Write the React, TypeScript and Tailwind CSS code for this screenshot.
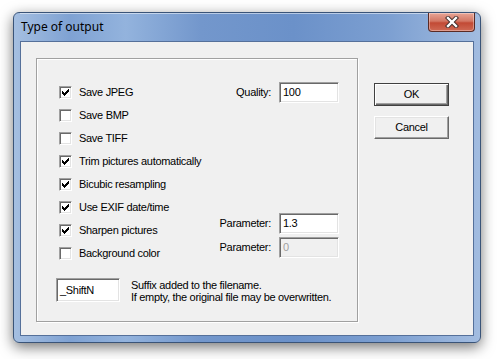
import React from "react";

function CheckMark() {
  return (
    <svg width="7" height="7" viewBox="0 0 7 7" shapeRendering="crispEdges">
      <path d="M6 0h1v1h-1zM5 1h2v1h-2zM0 2h1v1h-1zM4 2h3v1h-3zM0 3h2v1h-2zM3 3h3v1h-3zM0 4h5v1h-5zM1 5h3v1h-3zM2 6h1v1h-1z" fill="#000" />
    </svg>
  );
}

function Check({ checked }: { checked?: boolean }) {
  return (
    <span className="w-[13px] h-[13px] shrink-0 flex items-center justify-center bg-white border border-t-[#a0a0a0] border-l-[#a0a0a0] border-b-white border-r-white shadow-[inset_1px_1px_0_#696969,inset_-1px_-1px_0_#e3e3e3]">
      {checked && <CheckMark />}
    </span>
  );
}

function Row({ checked, label }: { checked?: boolean; label: string }) {
  return (
    <div className="h-[23px] flex items-center gap-[7px]">
      <Check checked={checked} />
      <span className="leading-[13px]">{label}</span>
    </div>
  );
}

function Field({ value, disabled, w = "w-[60px]", h = "h-[21px]" }: { value: string; disabled?: boolean; w?: string; h?: string }) {
  return (
    <div
      className={`${w} ${h} flex items-center pl-[2px] border border-t-[#a0a0a0] border-l-[#a0a0a0] border-b-white border-r-white shadow-[inset_1px_1px_0_#696969,inset_-1px_-1px_0_#e3e3e3] ${
        disabled ? "bg-[#f0f0f0] text-[#a0a0a0]" : "bg-white text-black"
      }`}
    >
      <span className="leading-[13px] pl-[1px]">{value}</span>
    </div>
  );
}

function LabeledField({ label, value, disabled }: { label: string; value: string; disabled?: boolean }) {
  return (
    <div className="flex items-center justify-end gap-[8px]">
      <span className="leading-[13px]">{label}</span>
      <Field value={value} disabled={disabled} />
    </div>
  );
}

export default function App() {
  return (
    <div className="w-[497px] h-[359px] bg-white pt-[12px] pl-[13px] font-['Liberation_Sans',Arial,sans-serif] text-[11px] tracking-[-0.3px] text-black">
      <div className="w-[468px] h-[331px] rounded-[6px] border border-[#3a5478] shadow-[0_4px_14px_rgba(0,0,0,0.55)] bg-[linear-gradient(90deg,#a5bfe1_0%,#7fa2d3_12%,#93b3dd_24%,#7397cc_40%,#6b91c9_60%,#7c9fd1_80%,#a2bce0_100%)] flex flex-col px-[6px] pb-[6px]">
        <div className="h-[28px] flex items-start justify-between shadow-[inset_0_1px_0_rgba(255,255,255,0.5)]">
          <span className="self-center pl-[1px] font-['Noto_Sans',sans-serif] text-[12px] tracking-normal leading-[16px] text-black">
            Type of output
          </span>
          <div className="w-[47px] h-[19px] rounded-b-[4px] border border-t-0 border-[#5a2a24] bg-[linear-gradient(180deg,#e8a596_0%,#d37764_45%,#c24a35_55%,#cf6a55_100%)] shadow-[inset_0_0_0_1px_rgba(255,255,255,0.35)] flex items-center justify-center -mr-[1px]">
            <svg width="14" height="12" viewBox="0 0 14 12">
              <path d="M3 2L11 10M11 2L3 10" stroke="#3c2a28" strokeWidth="4.2" strokeLinecap="square" />
              <path d="M3 2L11 10M11 2L3 10" stroke="#ffffff" strokeWidth="2.4" strokeLinecap="square" />
            </svg>
          </div>
        </div>
        <div className="flex-1 border border-[#55709a] bg-[#f0f0f0] flex items-start pt-[16px] pl-[15px]">
          <div className="w-[322px] h-[264px] border border-[#a0a0a0] shadow-[inset_1px_1px_0_#fff,1px_1px_0_#fff] flex flex-col pt-[22px] pl-[19px] pr-[18px]">
            <div className="flex">
              <div className="flex flex-col ml-[3px]">
                <Row checked label="Save JPEG" />
                <Row label="Save BMP" />
                <Row label="Save TIFF" />
                <Row checked label="Trim pictures automatically" />
                <Row checked label="Bicubic resampling" />
                <Row checked label="Use EXIF date/time" />
                <Row checked label="Sharpen pictures" />
                <Row label="Background color" />
              </div>
              <div className="ml-auto flex flex-col">
                <div className="mt-[1px]">
                  <LabeledField label="Quality:" value="100" />
                </div>
                <div className="mt-[110px]">
                  <LabeledField label="Parameter:" value="1.3" />
                </div>
                <div className="mt-[3px]">
                  <LabeledField label="Parameter:" value="0" disabled />
                </div>
              </div>
            </div>
            <div className="flex items-start mt-[13px]">
              <Field value="_ShiftN" w="w-[64px]" h="h-[24px]" />
              <div className="ml-[11px] flex flex-col leading-[12px] pt-[1px]">
                <span>Suffix added to the filename.</span>
                <span>If empty, the original file may be overwritten.</span>
              </div>
            </div>
          </div>
          <div className="ml-[16px] mt-[25px] flex flex-col gap-[10px]">
            <button className="w-[75px] h-[23px] bg-[#f0f0f0] border border-[#404040] shadow-[inset_1px_1px_0_#fff,inset_-1px_-1px_0_#696969,inset_-2px_-2px_0_#a0a0a0] flex items-center justify-center leading-[13px]">
              OK
            </button>
            <button className="w-[75px] h-[23px] bg-[#f0f0f0] border border-t-white border-l-white border-b-[#696969] border-r-[#696969] shadow-[inset_-1px_-1px_0_#a0a0a0,inset_1px_1px_0_#e3e3e3] flex items-center justify-center leading-[13px]">
              Cancel
            </button>
          </div>
        </div>
      </div>
    </div>
  );
}
